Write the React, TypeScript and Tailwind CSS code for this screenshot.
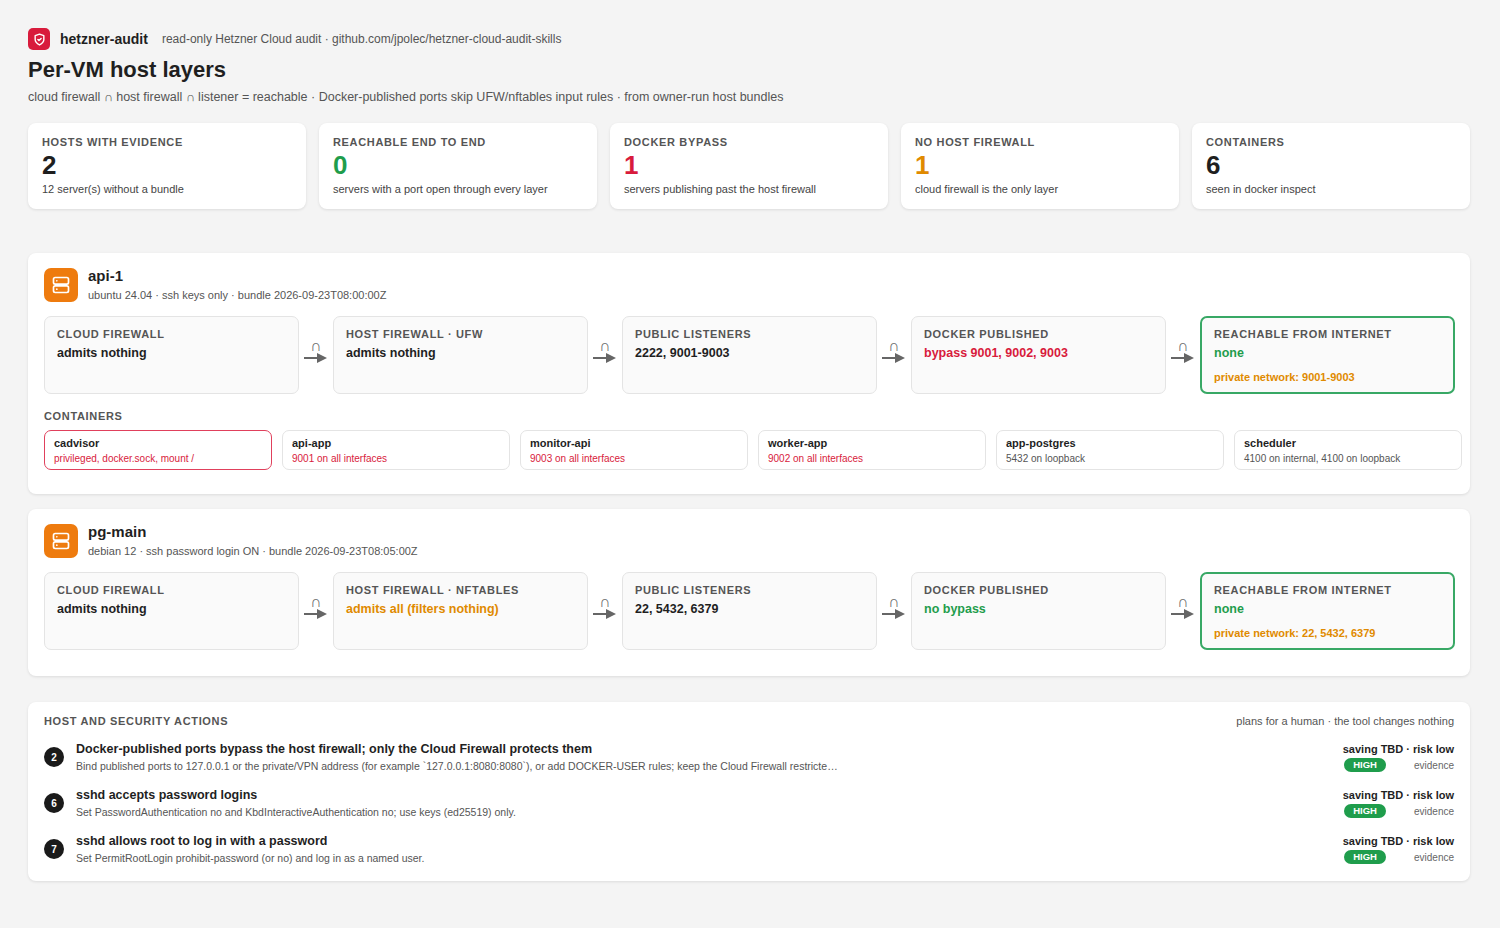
import React from 'react';

type Tone = 'dark' | 'red' | 'green' | 'amber';
const toneCls: Record<Tone, string> = {
  dark: 'text-[#1f1f1f]',
  red: 'text-[#d81b3c]',
  green: 'text-[#1f9d4c]',
  amber: 'text-[#e08a00]',
};

const stats: { label: string; value: string; tone: Tone; sub: string }[] = [
  { label: 'HOSTS WITH EVIDENCE', value: '2', tone: 'dark', sub: '12 server(s) without a bundle' },
  { label: 'REACHABLE END TO END', value: '0', tone: 'green', sub: 'servers with a port open through every layer' },
  { label: 'DOCKER BYPASS', value: '1', tone: 'red', sub: 'servers publishing past the host firewall' },
  { label: 'NO HOST FIREWALL', value: '1', tone: 'amber', sub: 'cloud firewall is the only layer' },
  { label: 'CONTAINERS', value: '6', tone: 'dark', sub: 'seen in docker inspect' },
];

type Stage = { label: string; value: string; tone: Tone; note?: string; final?: boolean };

const hosts: {
  name: string; meta: string; stages: Stage[];
  containers?: { name: string; desc: string; tone: 'red' | 'gray'; bad?: boolean }[];
}[] = [
  {
    name: 'api-1',
    meta: 'ubuntu 24.04 · ssh keys only · bundle 2026-09-23T08:00:00Z',
    stages: [
      { label: 'CLOUD FIREWALL', value: 'admits nothing', tone: 'dark' },
      { label: 'HOST FIREWALL · UFW', value: 'admits nothing', tone: 'dark' },
      { label: 'PUBLIC LISTENERS', value: '2222, 9001-9003', tone: 'dark' },
      { label: 'DOCKER PUBLISHED', value: 'bypass 9001, 9002, 9003', tone: 'red' },
      { label: 'REACHABLE FROM INTERNET', value: 'none', tone: 'green', note: 'private network: 9001-9003', final: true },
    ],
    containers: [
      { name: 'cadvisor', desc: 'privileged, docker.sock, mount /', tone: 'red', bad: true },
      { name: 'api-app', desc: '9001 on all interfaces', tone: 'red' },
      { name: 'monitor-api', desc: '9003 on all interfaces', tone: 'red' },
      { name: 'worker-app', desc: '9002 on all interfaces', tone: 'red' },
      { name: 'app-postgres', desc: '5432 on loopback', tone: 'gray' },
      { name: 'scheduler', desc: '4100 on internal, 4100 on loopback', tone: 'gray' },
    ],
  },
  {
    name: 'pg-main',
    meta: 'debian 12 · ssh password login ON · bundle 2026-09-23T08:05:00Z',
    stages: [
      { label: 'CLOUD FIREWALL', value: 'admits nothing', tone: 'dark' },
      { label: 'HOST FIREWALL · NFTABLES', value: 'admits all (filters nothing)', tone: 'amber' },
      { label: 'PUBLIC LISTENERS', value: '22, 5432, 6379', tone: 'dark' },
      { label: 'DOCKER PUBLISHED', value: 'no bypass', tone: 'green' },
      { label: 'REACHABLE FROM INTERNET', value: 'none', tone: 'green', note: 'private network: 22, 5432, 6379', final: true },
    ],
  },
];

const actions = [
  {
    n: '2',
    title: 'Docker-published ports bypass the host firewall; only the Cloud Firewall protects them',
    desc: "Bind published ports to 127.0.0.1 or the private/VPN address (for example `127.0.0.1:8080:8080`), or add DOCKER-USER rules; keep the Cloud Firewall restricted to the ports you actually need.",
  },
  { n: '6', title: 'sshd accepts password logins', desc: 'Set PasswordAuthentication no and KbdInteractiveAuthentication no; use keys (ed25519) only.' },
  { n: '7', title: 'sshd allows root to log in with a password', desc: 'Set PermitRootLogin prohibit-password (or no) and log in as a named user.' },
];

function Arrow() {
  return (
    <div className="w-[34px] shrink-0 flex flex-col items-center justify-center pb-[6px]">
      <span className="text-[16px] leading-[12px] text-[#666]">∩</span>
      <svg width="26" height="12" viewBox="0 0 26 12">
        <line x1="1" y1="6" x2="16" y2="6" stroke="#666" strokeWidth="2" />
        <polygon points="14,1 24,6 14,11" fill="#666" />
      </svg>
    </div>
  );
}

function ServerIcon() {
  return (
    <div className="w-[34px] h-[34px] rounded-[7px] bg-[#ee7b0e] flex items-center justify-center">
      <svg width="20" height="20" viewBox="0 0 24 24" fill="none" stroke="white" strokeWidth="2" strokeLinecap="round" strokeLinejoin="round">
        <rect x="3" y="3" width="18" height="8" rx="2" />
        <rect x="3" y="13" width="18" height="8" rx="2" />
        <line x1="7" y1="7" x2="7.01" y2="7" />
        <line x1="7" y1="17" x2="7.01" y2="17" />
      </svg>
    </div>
  );
}

export default function App() {
  return (
    <div className="min-h-screen bg-[#f4f4f4] text-[#1f1f1f] px-[28px] pt-[28px] pb-[40px]" style={{ fontFamily: '"Liberation Sans", Arial, sans-serif' }}>
      <div className="w-[1442px]">
        <div className="flex items-center gap-[10px] h-[22px]">
          <div className="w-[22px] h-[22px] rounded-[5px] bg-[#d81b3c] flex items-center justify-center">
            <svg width="13" height="13" viewBox="0 0 24 24" fill="none" stroke="white" strokeWidth="2.6" strokeLinecap="round" strokeLinejoin="round">
              <path d="M12 22s8-4 8-10V5l-8-3-8 3v7c0 6 8 10 8 10z" />
              <path d="M9 12l2 2 4-4" />
            </svg>
          </div>
          <span className="text-[14px] font-bold">hetzner-audit</span>
          <span className="text-[12px] text-[#555] ml-[4px]">read-only Hetzner Cloud audit · github.com/jpolec/hetzner-cloud-audit-skills</span>
        </div>
        <h1 className="text-[22px] font-bold mt-[6px] leading-[28px]">Per-VM host layers</h1>
        <p className="text-[12.5px] leading-[16px] text-[#555] mt-[5px]">cloud firewall ∩ host firewall ∩ listener = reachable · Docker-published ports skip UFW/nftables input rules · from owner-run host bundles</p>

        <div className="grid grid-cols-5 gap-[13px] mt-[18px]">
          {stats.map(s => (
            <div key={s.label} className="bg-white rounded-[8px] shadow-[0_1px_3px_rgba(0,0,0,0.1)] h-[86px] px-[14px] pt-[12px]">
              <div className="text-[11px] leading-[14px] font-bold tracking-[0.06em] text-[#555]">{s.label}</div>
              <div className={`text-[26px] font-bold leading-[30px] mt-[1px] ${toneCls[s.tone]}`}>{s.value}</div>
              <div className="text-[11px] leading-[14px] text-[#444] mt-[2px]">{s.sub}</div>
            </div>
          ))}
        </div>

        <div className="mt-[44px] flex flex-col gap-[15px]">
          {hosts.map(h => (
            <div key={h.name} className="bg-white rounded-[8px] shadow-[0_1px_3px_rgba(0,0,0,0.1)] px-[16px] pt-[14px] pb-[26px]">
              <div className="flex items-center gap-[10px]">
                <ServerIcon />
                <div>
                  <div className="text-[15px] font-bold leading-[18px]">{h.name}</div>
                  <div className="text-[11px] leading-[14px] text-[#555] mt-[3px]">{h.meta}</div>
                </div>
              </div>
              <div className="flex mt-[14px] w-[1411px]">
                {h.stages.map((st, i) => (
                  <React.Fragment key={st.label}>
                    {i > 0 && <Arrow />}
                    <div className={`w-[255px] h-[78px] shrink-0 rounded-[7px] bg-[#fafafa] px-[12px] ${st.final ? 'border-2 border-[#38a865] pt-[9px]' : 'border border-[#e4e4e4] pt-[10px]'}`}>
                      <div className="text-[11px] leading-[14px] font-bold tracking-[0.06em] text-[#555]">{st.label}</div>
                      <div className={`text-[12.5px] leading-[16px] font-bold mt-[4px] ${toneCls[st.tone]}`}>{st.value}</div>
                      {st.note && <div className="text-[11px] leading-[14px] font-bold text-[#e08a00] mt-[9px]">{st.note}</div>}
                    </div>
                  </React.Fragment>
                ))}
              </div>
              {h.containers && (
                <>
                  <div className="text-[11px] leading-[14px] font-bold tracking-[0.06em] text-[#555] mt-[15px]">CONTAINERS</div>
                  <div className="flex gap-[10px] mt-[7px] -mb-[2px]">
                    {h.containers.map(c => (
                      <div key={c.name} className={`w-[228px] h-[40px] shrink-0 rounded-[7px] px-[9px] pt-[5px] bg-white ${c.bad ? 'border border-[#e0405c]' : 'border border-[#e4e4e4]'}`}>
                        <div className="text-[11px] leading-[14px] font-bold">{c.name}</div>
                        <div className={`text-[10px] leading-[13px] mt-[2px] ${c.tone === 'red' ? 'text-[#d81b3c]' : 'text-[#555]'}`}>{c.desc}</div>
                      </div>
                    ))}
                  </div>
                </>
              )}
            </div>
          ))}
        </div>

        <div className="mt-[26px] bg-white rounded-[8px] shadow-[0_1px_3px_rgba(0,0,0,0.1)] px-[16px] pt-[12px] pb-[16px]">
          <div className="flex justify-between items-center">
            <div className="text-[11px] leading-[14px] font-bold tracking-[0.06em] text-[#555]">HOST AND SECURITY ACTIONS</div>
            <div className="text-[11px] leading-[14px] text-[#555]">plans for a human · the tool changes nothing</div>
          </div>
          <div className="flex flex-col gap-[14px] mt-[13px]">
            {actions.map(a => (
              <div key={a.n} className="flex items-center gap-[12px]">
                <div className="w-[20px] h-[20px] rounded-full bg-[#1a1a1a] text-white text-[10px] font-bold flex items-center justify-center shrink-0">{a.n}</div>
                <div className="flex-1 min-w-0">
                  <div className="text-[12.5px] font-bold leading-[16px]">{a.title}</div>
                  <div className="text-[10.5px] leading-[14px] text-[#555] mt-[2px] truncate max-w-[765px]">{a.desc}</div>
                </div>
                <div className="flex flex-col items-end shrink-0">
                  <div className="text-[11px] leading-[14px] font-bold">saving TBD · risk low</div>
                  <div className="flex items-center gap-[28px] mt-[2px]">
                    <span className="bg-[#1f9d4c] text-white text-[9.5px] font-bold rounded-full px-[9px] h-[14px] leading-[14px]">HIGH</span>
                    <span className="text-[10px] text-[#666]">evidence</span>
                  </div>
                </div>
              </div>
            ))}
          </div>
        </div>
      </div>
    </div>
  );
}
